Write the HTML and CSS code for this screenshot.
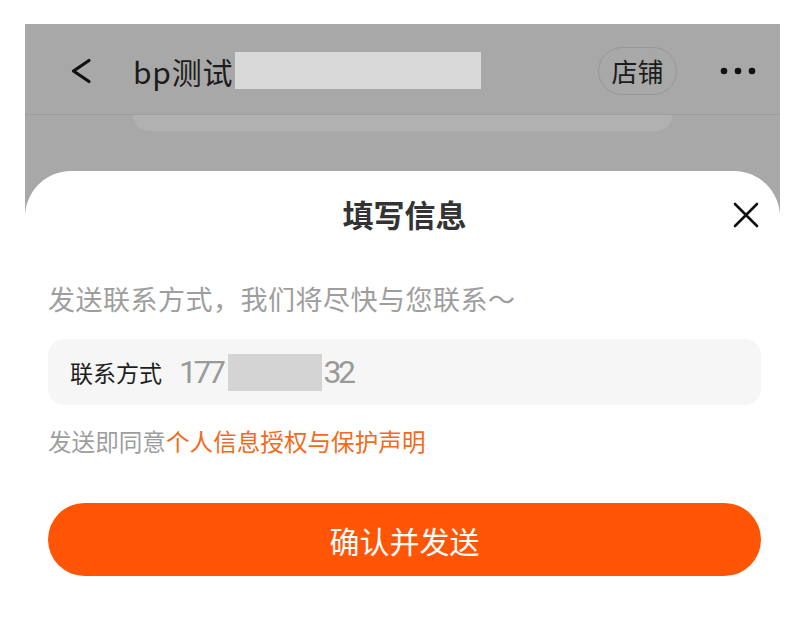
FILE: index.html
```html
<!DOCTYPE html>
<html lang="zh-CN">
<head>
<meta charset="utf-8">
<title>填写信息</title>
<link rel="stylesheet" href="styles.css">
</head>
<body>
<div class="screen">
  <div class="nav">
    <svg class="back" width="22" height="26" viewBox="0 0 22 26"><polyline points="19,2.5 3.5,13 19,23.5" fill="none" stroke="#111" stroke-width="3.2" stroke-linecap="round" stroke-linejoin="round"/></svg>
    <div class="shop-title">bp测试</div>
    <div class="redact-wide"></div>
    <div class="grow"></div>
    <div class="pill">店铺</div>
    <svg class="dots" width="36" height="8" viewBox="0 0 36 8"><circle cx="4" cy="4" r="3.3" fill="#111"/><circle cx="18" cy="4" r="3.3" fill="#111"/><circle cx="32" cy="4" r="3.3" fill="#111"/></svg>
  </div>
  <div class="tabstrip"></div>
  <div class="sheet">
    <div class="sheet-head">
      <span></span>
      <div class="sheet-title">填写信息</div>
      <svg class="close" width="26" height="26" viewBox="0 0 26 26"><path d="M2 2 L24 24 M24 2 L2 24" stroke="#111" stroke-width="2.6" stroke-linecap="round"/></svg>
    </div>
    <div class="subtitle">发送联系方式，我们将尽快与您联系～</div>
    <div class="field">
      <span class="field-label">联系方式</span>
      <span class="field-value">177</span><span class="redact-num"></span><span class="field-value">32</span>
    </div>
    <div class="agree">发送即同意<span class="link">个人信息授权与保护声明</span></div>
    <div class="submit">确认并发送</div>
  </div>
</div>
</body>
</html>
```
FILE: styles.css
```css
html, body {
  margin: 0;
  padding: 0;
  background: #fff;
}
body {
  font-family: "Noto Sans CJK SC", "Noto Sans", sans-serif;
  overflow: hidden;
}
.screen {
  margin: 24px 0 0 25px;
  width: 755px;
  height: 620px;
  background: #a8a8a8;
  display: flex;
  flex-direction: column;
  overflow: hidden;
}
.nav {
  height: 91px;
  box-sizing: border-box;
  padding: 3px 24px 0 45px;
  display: flex;
  align-items: center;
  border-bottom: 1px solid #9d9d9d;
  flex: none;
}
.back {
  display: block;
  flex: none;
}
.shop-title {
  margin-left: 41px;
  font-size: 30px;
  line-height: 40px;
  letter-spacing: 0.8px;
  color: #1c1c1c;
}
.redact-wide {
  width: 246px;
  height: 37px;
  background: #d9d9d9;
  margin-left: 2px;
  margin-top: -1px;
}
.grow { flex: 1; }
.pill {
  width: 79px;
  height: 48px;
  box-sizing: border-box;
  border: 1px solid #979797;
  border-radius: 24px;
  display: flex;
  align-items: center;
  justify-content: center;
  font-size: 26px;
  color: #1c1c1c;
}
.dots {
  display: block;
  margin-left: 43px;
}
.tabstrip {
  flex: none;
  margin-left: 108px;
  width: 539px;
  height: 16px;
  background: #b1b1b1;
  border-radius: 0 0 16px 16px;
  margin-bottom: 40px;
}
.sheet {
  flex: 1;
  background: #fff;
  border-radius: 46px 46px 0 0;
  padding: 0 19px 0 23px;
  display: flex;
  flex-direction: column;
}
.sheet-head {
  height: 86px;
  display: grid;
  grid-template-columns: 1fr auto 1fr;
  align-items: center;
}
.sheet-title {
  font-size: 31px;
  font-weight: 700;
  color: #333;
  line-height: 40px;
}
.close {
  justify-self: end;
  margin-right: 2px;
  margin-top: 2px;
  display: block;
}
.subtitle {
  margin-top: 22px;
  font-size: 27px;
  letter-spacing: 0.5px;
  line-height: 40px;
  color: #9e9e9e;
}
.field {
  margin-top: 20px;
  height: 66px;
  border-radius: 16px;
  background: #f6f6f6;
  display: flex;
  align-items: center;
  padding-left: 22px;
}
.field-label {
  font-size: 23px;
  color: #1e1e1e;
  margin-right: 17px;
}
.field-value {
  font-family: Roboto, "Noto Sans", sans-serif;
  font-size: 32px;
  letter-spacing: -3.5px;
  color: #9a9a9a;
  font-weight: 400;
}
.redact-num {
  width: 94px;
  height: 37px;
  background: #d4d4d4;
  margin-left: 6px;
  margin-right: 1px;
}
.agree {
  margin-top: 19px;
  font-size: 23.6px;
  line-height: 34px;
  color: #9e9e9e;
}
.link {
  color: #f26a1b;
}
.submit {
  margin-top: 45px;
  height: 73px;
  border-radius: 37px;
  background: #ff5504;
  color: #fff;
  font-size: 30px;
  display: flex;
  align-items: center;
  justify-content: center;
}
```
